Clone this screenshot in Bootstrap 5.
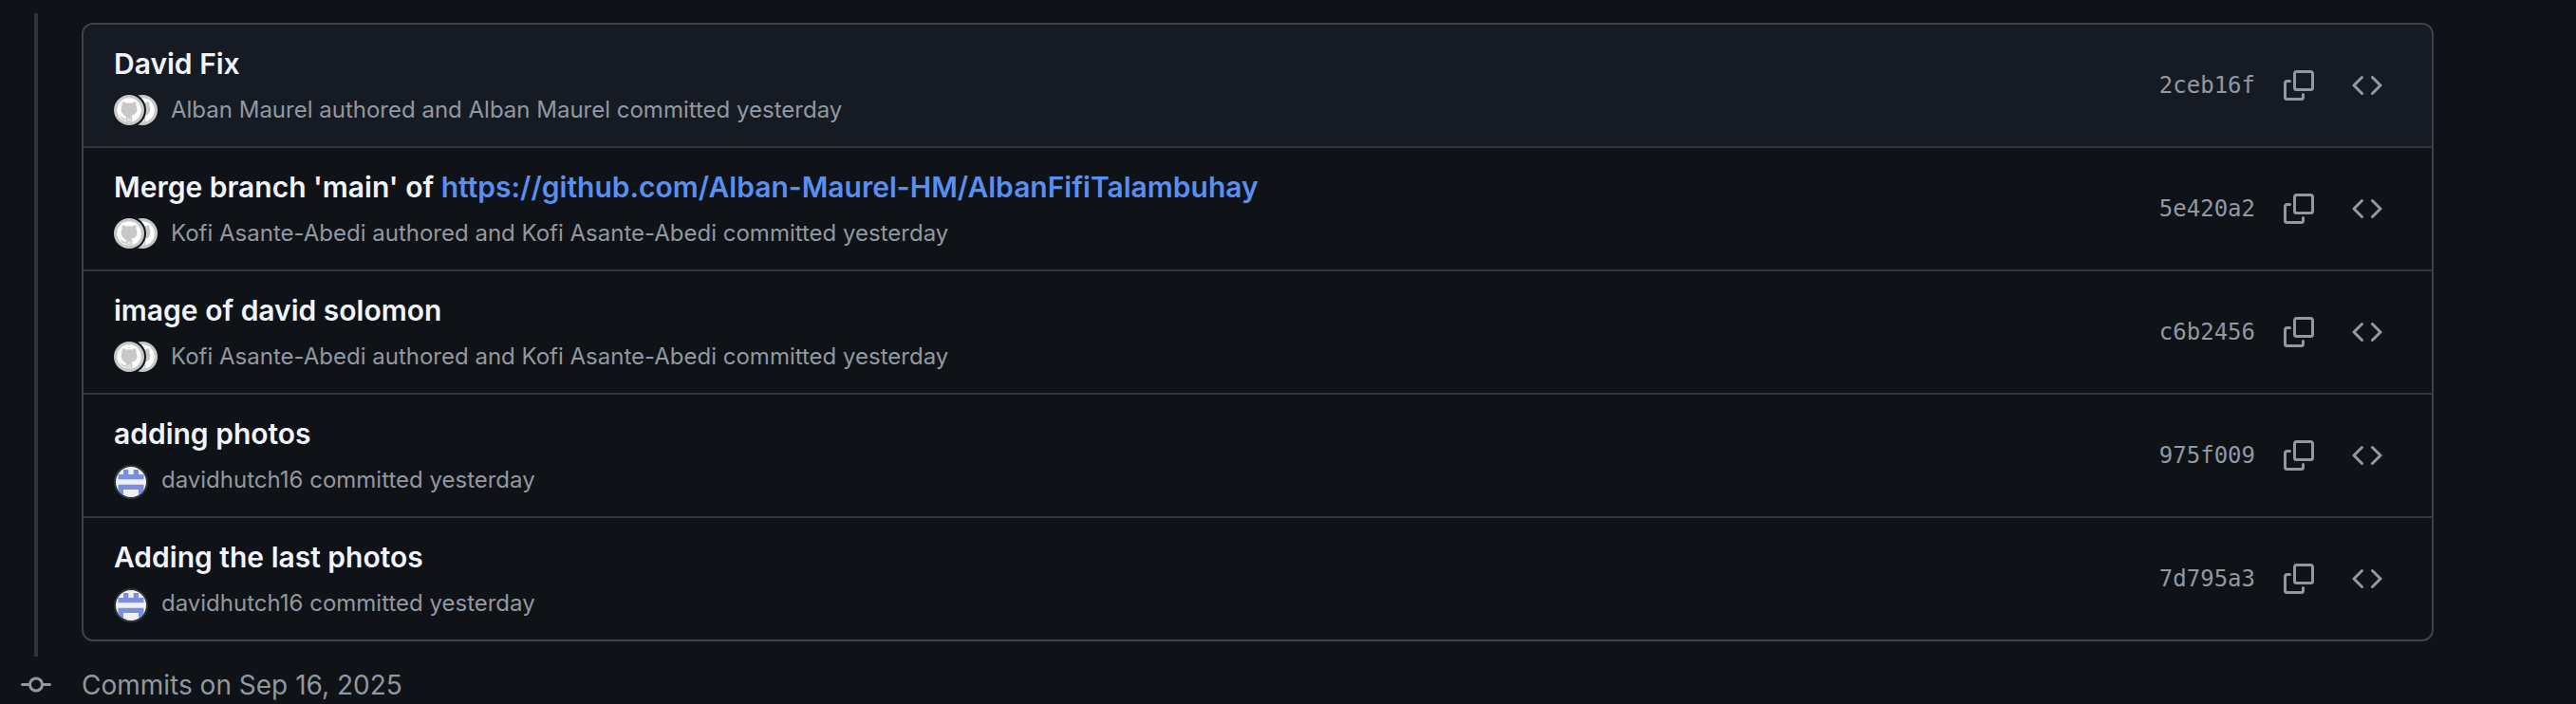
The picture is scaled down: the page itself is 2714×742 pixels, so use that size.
<!DOCTYPE html>
<html lang="en">
<head>
<meta charset="utf-8">
<meta name="viewport" content="width=device-width, initial-scale=1">
<title>Commits</title>
<link href="https://cdn.jsdelivr.net/npm/bootstrap@5.3.0/dist/css/bootstrap.min.css" rel="stylesheet">
<style>
  body { background: #0f1217; color: #9298a1; font-family: Inter, "Liberation Sans", sans-serif; overflow: hidden; }
  .timeline { padding: 14px 150px 0 36px; }
  .timeline-line { width: 4px; margin-right: 46px; background: #303338; }
  .timeline-body { padding: 10px 0 16px; min-width: 0; }
  .commit-list { --bs-list-group-bg: transparent; --bs-list-group-border-color: #3d434a; --bs-list-group-border-radius: 12px; border: 2px solid #3d434a; border-radius: 12px; overflow: hidden; }
  .commit-row { height: 130px; padding: 21px 40px 0 32px; border: 0; border-bottom: 2px solid #30353b; color: inherit; }
  .commit-row:last-child { height: 128px; border-bottom: 0; }
  .commit-row.hovered { background: #161b23; }
  .commit-title { font-size: 30px; line-height: 40px; font-weight: 600; color: #f1f5fb; margin: 0; white-space: nowrap; }
  .commit-title a { color: inherit; text-decoration: none; }
  .commit-title a.url { color: #588ff2; }
  .commit-meta { font-size: 24px; line-height: 36px; margin-top: 11px; white-space: nowrap; }
  .pair { width: 46px; height: 32px; margin-right: 14px; }
  .single { width: 36px; height: 36px; margin: 2px 14px 0 0; }
  .commit-side { height: 128px; margin-top: -21px; }
  .sha { font: 24px/36px "DejaVu Sans Mono", monospace; color: inherit; text-decoration: none; margin-right: 18px; }
  .icon-btn { width: 56px; height: 56px; padding: 0; border: 0; color: inherit; display: flex; align-items: center; justify-content: center; }
  .icon-btn svg, .day-icon { width: 32px; height: 32px; fill: currentColor; }
  .day { padding: 12px 22px 0; }
  .day-icon { margin-right: 32px; flex: none; }
  .day h2 { font-size: 28px; line-height: 36px; font-weight: 400; margin: 0; }
</style>
</head>
<body>
<svg width="0" height="0" class="position-absolute" aria-hidden="true">
  <symbol id="copy" viewBox="0 0 16 16"><path d="M0 6.75C0 5.784.784 5 1.75 5h1.5a.75.75 0 0 1 0 1.5h-1.5a.25.25 0 0 0-.25.25v7.5c0 .138.112.25.25.25h7.5a.25.25 0 0 0 .25-.25v-1.5a.75.75 0 0 1 1.5 0v1.5A1.75 1.75 0 0 1 9.25 16h-7.5A1.75 1.75 0 0 1 0 14.25Z"/><path d="M5 1.75C5 .784 5.784 0 6.75 0h7.5C15.216 0 16 .784 16 1.75v7.5A1.75 1.75 0 0 1 14.25 11h-7.5A1.75 1.75 0 0 1 5 9.25Zm1.75-.25a.25.25 0 0 0-.25.25v7.5c0 .138.112.25.25.25h7.5a.25.25 0 0 0 .25-.25v-7.5a.25.25 0 0 0-.25-.25Z"/></symbol>
  <symbol id="code" viewBox="0 0 16 16"><path d="m11.28 3.22 4.25 4.25a.75.75 0 0 1 0 1.06l-4.25 4.25a.749.749 0 0 1-1.275-.326.749.749 0 0 1 .215-.734L13.94 8l-3.72-3.72a.749.749 0 0 1 .326-1.275.749.749 0 0 1 .734.215Zm-6.56 0a.751.751 0 0 1 1.042.018.751.751 0 0 1 .018 1.042L2.06 8l3.72 3.72a.749.749 0 0 1-.326 1.275.749.749 0 0 1-.734-.215L.47 8.53a.75.75 0 0 1 0-1.06Z"/></symbol>
  <symbol id="cat" viewBox="0 0 32 32">
    <circle cx="16" cy="16" r="16" fill="#c8c8c8"/><circle cx="16" cy="16" r="12.800" fill="#fff"/>
    <path fill="#c8c8c8" d="M9 7.200c1.600-.1 3 .6 4.200 1.500 1.800-.5 3.800-.5 5.600 0 1.200-.9 2.600-1.600 4.200-1.500.5 1.400.6 2.700.2 3.800 1 1.200 1.300 2.500 1.200 4.200-.2 4-2.400 5.800-5.900 6.300.6.800.8 1.600.8 2.600v5.200h-1.400v-4.800h-.6v5.200h-1v-5.200h-.7v5.200h-1v-5.200H14v4.800h-1.400v-2.800c-2.300.4-3.700-.3-4.600-2-.5-1-1.200-1.500-2-2 1.700-.4 2.700.5 3.500 1.600.8 1.100 1.700 1.300 3.200.9.100-.7.300-1.200.8-1.600C10 21 7.800 19.200 7.600 15.200c-.1-1.700.2-3 1.200-4.200-.4-1.100-.3-2.400.2-3.800Z"/>
  </symbol>
  <symbol id="pair" viewBox="0 0 46 32">
    <use href="#cat" x="14" width="32" height="32"/><circle cx="16" cy="16" r="18" fill="#11151b"/><use href="#cat" width="32" height="32"/>
  </symbol>
  <clipPath id="round"><circle cx="18" cy="18" r="16"/></clipPath>
  <symbol id="identicon" viewBox="0 0 36 36">
    <circle cx="18" cy="18" r="18" fill="#303338"/><circle cx="18" cy="18" r="16" fill="#f0f0f0"/>
    <path clip-path="url(#round)" fill="#7b90dd" d="M10 5h5.300v5h5.400V5H26v5h5.500v5.300h-27V10H10ZM4.500 20.700h27v11H26V26H10v5.700H4.500Z"/>
  </symbol>
</svg>

<main>
  <div class="timeline d-flex">
    <div class="timeline-line flex-shrink-0"></div>
    <div class="timeline-body flex-grow-1">
      <ul class="list-group commit-list">
        <li class="list-group-item commit-row hovered d-flex justify-content-between">
          <div>
            <h4 class="commit-title"><a href="#">David Fix</a></h4>
            <div class="commit-meta d-flex align-items-center"><svg class="pair"><use href="#pair"/></svg><span>Alban Maurel authored and Alban Maurel committed yesterday</span></div>
          </div>
          <div class="commit-side d-flex align-items-center"><a class="sha" href="#">2ceb16f</a><div class="d-flex gap-3"><button class="btn icon-btn" aria-label="Copy full SHA"><svg><use href="#copy"/></svg></button><button class="btn icon-btn" aria-label="Browse code"><svg><use href="#code"/></svg></button></div></div>
        </li>
        <li class="list-group-item commit-row d-flex justify-content-between">
          <div>
            <h4 class="commit-title"><a href="#">Merge branch 'main' of</a> <a class="url" href="#">https://github.com/Alban-Maurel-HM/AlbanFifiTalambuhay</a></h4>
            <div class="commit-meta d-flex align-items-center"><svg class="pair"><use href="#pair"/></svg><span>Kofi Asante-Abedi authored and Kofi Asante-Abedi committed yesterday</span></div>
          </div>
          <div class="commit-side d-flex align-items-center"><a class="sha" href="#">5e420a2</a><div class="d-flex gap-3"><button class="btn icon-btn" aria-label="Copy full SHA"><svg><use href="#copy"/></svg></button><button class="btn icon-btn" aria-label="Browse code"><svg><use href="#code"/></svg></button></div></div>
        </li>
        <li class="list-group-item commit-row d-flex justify-content-between">
          <div>
            <h4 class="commit-title"><a href="#">image of david solomon</a></h4>
            <div class="commit-meta d-flex align-items-center"><svg class="pair"><use href="#pair"/></svg><span>Kofi Asante-Abedi authored and Kofi Asante-Abedi committed yesterday</span></div>
          </div>
          <div class="commit-side d-flex align-items-center"><a class="sha" href="#">c6b2456</a><div class="d-flex gap-3"><button class="btn icon-btn" aria-label="Copy full SHA"><svg><use href="#copy"/></svg></button><button class="btn icon-btn" aria-label="Browse code"><svg><use href="#code"/></svg></button></div></div>
        </li>
        <li class="list-group-item commit-row d-flex justify-content-between">
          <div>
            <h4 class="commit-title"><a href="#">adding photos</a></h4>
            <div class="commit-meta d-flex"><svg class="single"><use href="#identicon"/></svg><span>davidhutch16 committed yesterday</span></div>
          </div>
          <div class="commit-side d-flex align-items-center"><a class="sha" href="#">975f009</a><div class="d-flex gap-3"><button class="btn icon-btn" aria-label="Copy full SHA"><svg><use href="#copy"/></svg></button><button class="btn icon-btn" aria-label="Browse code"><svg><use href="#code"/></svg></button></div></div>
        </li>
        <li class="list-group-item commit-row d-flex justify-content-between">
          <div>
            <h4 class="commit-title"><a href="#">Adding the last photos</a></h4>
            <div class="commit-meta d-flex"><svg class="single"><use href="#identicon"/></svg><span>davidhutch16 committed yesterday</span></div>
          </div>
          <div class="commit-side d-flex align-items-center"><a class="sha" href="#">7d795a3</a><div class="d-flex gap-3"><button class="btn icon-btn" aria-label="Copy full SHA"><svg><use href="#copy"/></svg></button><button class="btn icon-btn" aria-label="Browse code"><svg><use href="#code"/></svg></button></div></div>
        </li>
      </ul>
    </div>
  </div>
  <div class="day d-flex align-items-center">
    <svg class="day-icon" viewBox="0 0 16 16" aria-hidden="true"><path d="M11.930 8.500a4.002 4.002 0 0 1-7.860 0H.750a.750.750 0 0 1 0-1.500h3.320a4.002 4.002 0 0 1 7.860 0h3.320a.750.750 0 0 1 0 1.500Zm-1.430-.750a2.500 2.500 0 1 0-5 0 2.500 2.500 0 0 0 5 0Z"/></svg>
    <h2>Commits on Sep 16, 2025</h2>
  </div>
</main>
<script src="https://cdn.jsdelivr.net/npm/bootstrap@5.3.0/dist/js/bootstrap.bundle.min.js"></script>
</body>
</html>
